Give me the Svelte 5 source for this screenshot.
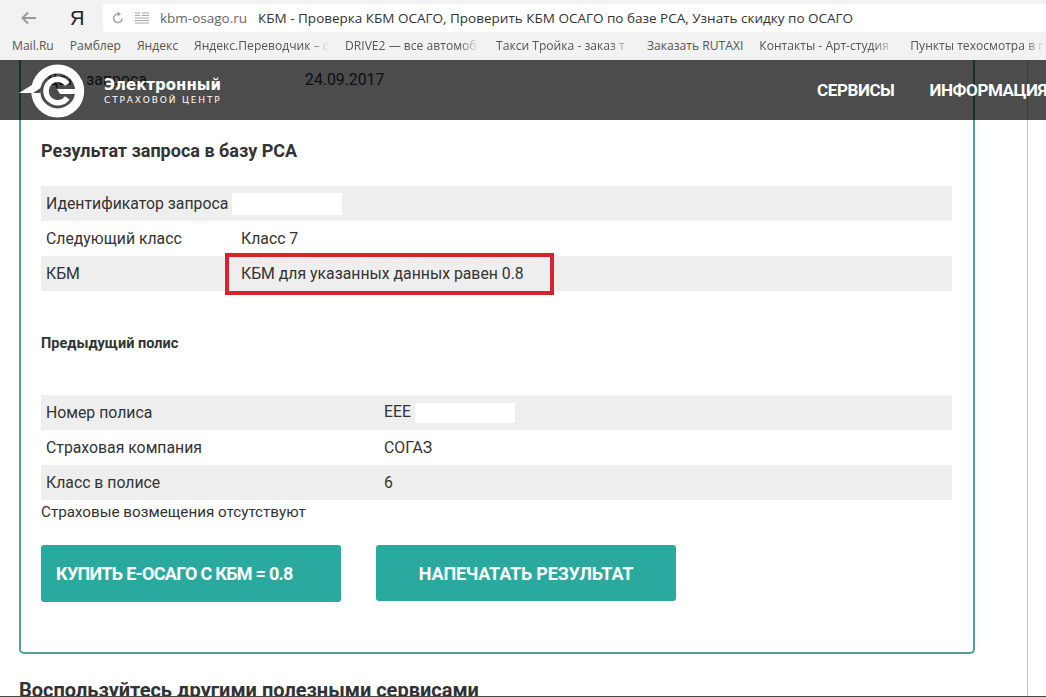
<script>
  const bookmarks = [
    { label: 'Mail.Ru' },
    { label: 'Рамблер' },
    { label: 'Яндекс' },
    { label: 'Яндекс.Переводчик – с', fade: true },
    { label: 'DRIVE2 — все автомоб', fade: true },
    { label: 'Такси Тройка - заказ т', fade: true },
    { label: 'Заказать RUTAXI' },
    { label: 'Контакты - Арт-студия', fade: true },
    { label: 'Пункты техосмотра в г', fade: true },
  ];

  const previousPolicy = [
    { label: 'Страховая компания', value: 'СОГАЗ' },
    { label: 'Класс в полисе', value: '6' },
  ];
</script>

<div class="window">
  <div class="toolbar">
    <svg class="back" width="18" height="14" viewBox="0 0 18 14" aria-hidden="true">
      <path d="M8 1.500 2.500 7 8 12.500M3 7h13" fill="none" stroke="#9a9a9a" stroke-width="2" />
    </svg>
    <span class="ya">Я</span>
    <div class="address">
      <svg width="14" height="14" viewBox="0 0 14 14" aria-hidden="true">
        <path d="M11 7.500A4.200 4.200 0 1 1 7 3.200" fill="none" stroke="#a3a3a3" stroke-width="1.500" />
        <path d="M6.500 .5 10 3 7 5.500z" fill="#a3a3a3" />
      </svg>
      <svg class="reader" width="14" height="13" viewBox="0 0 14 13" aria-hidden="true">
        <path d="M0 1h5M0 3.500h5M0 6h14M0 8.500h14M0 11h14M7 1h7M7 3.500h7" stroke="#a8a8a8" stroke-width="1" />
      </svg>
      <span class="host">kbm-osago.ru</span>
      <span class="title">КБМ - Проверка КБМ ОСАГО, Проверить КБМ ОСАГО по базе РСА, Узнать скидку по ОСАГО</span>
    </div>
  </div>

  <div class="bookmarks">
    {#each bookmarks as b}
      <span class="bookmark" class:fade={b.fade}>{b.label}</span>
    {/each}
  </div>

  <div class="viewport">
    <div class="content">
      <section class="card">
        <div class="row date-row">
          <span>Дата запроса</span>
          <span>24.09.2017</span>
        </div>

        <h2>Результат запроса в базу РСА</h2>

        <div class="table">
          <div class="row first">
            <span>Идентификатор запроса</span>
            <span class="blank request-id"></span>
          </div>
          <div class="row first">
            <span>Следующий класс</span>
            <span>Класс 7</span>
          </div>
          <div class="row first marked">
            <span>КБМ</span>
            <span>КБМ для указанных данных равен 0.8</span>
            <span class="red-box"></span>
          </div>
        </div>

        <h3>Предыдущий полис</h3>

        <div class="table">
          <div class="row second">
            <span>Номер полиса</span>
            <span>ЕЕЕ<span class="blank policy-no"></span></span>
          </div>
          {#each previousPolicy as p}
            <div class="row second">
              <span>{p.label}</span>
              <span>{p.value}</span>
            </div>
          {/each}
        </div>

        <p class="note">Страховые возмещения отсутствуют</p>

        <div class="actions">
          <button type="button" class="btn buy">КУПИТЬ Е-ОСАГО С КБМ = 0.8</button>
          <button type="button" class="btn print">НАПЕЧАТАТЬ РЕЗУЛЬТАТ</button>
        </div>
      </section>

      <h2 class="services">Воспользуйтесь другими полезными сервисами</h2>
    </div>

    <header class="site-header">
      <div class="logo">
        <svg width="68" height="58" viewBox="0 0 68 58" aria-hidden="true">
          <!-- outer ring, inner C and the bar running out to the ring -->
          <circle cx="39.700" cy="30" r="22" fill="none" stroke="#fff" stroke-width="9" />
          <path d="M49.300 23.200A11.750 11.750 0 1 0 49.300 36.800" fill="none" stroke="#fff" stroke-width="5.500" />
          <path d="M39 28H62V33H42z" fill="#fff" />
          <!-- wing on the left, with its notch cut out of the ring -->
          <path d="M1 32 17 22V32z" fill="#fff" />
          <path d="M15 32 24 26 22 32z" fill="#4d4d4d" />
        </svg>
        <span class="divider"></span>
        <div class="brand">
          <strong>Электронный</strong>
          <span>СТРАХОВОЙ ЦЕНТР</span>
        </div>
      </div>
      <nav>
        <span>СЕРВИСЫ</span>
        <span>ИНФОРМАЦИЯ</span>
      </nav>
    </header>
  </div>
</div>

<style>
  :global(body) {
    margin: 0;
    background: #fff;
  }

  .window {
    width: 1046px;
    height: 697px;
    display: flex;
    flex-direction: column;
    overflow: hidden;
    font-family: Roboto, "Noto Sans", sans-serif;
    color: #333;
  }

  .toolbar {
    height: 33px;
    flex: none;
    box-sizing: border-box;
    padding: 4px 0 1px 20px;
    display: flex;
    align-items: center;
    background: #f2f2f2;
  }

  .back {
    flex: none;
  }

  .ya {
    width: 12px;
    margin-left: 32px;
    font: 20px "Liberation Sans", sans-serif;
    color: #222;
  }

  .address {
    flex: 1;
    height: 28px;
    margin-left: 21px;
    padding-left: 8px;
    display: flex;
    align-items: center;
    background: #fff;
    border-radius: 2px 0 0 2px;
    font: 13.500px "Open Sans", sans-serif;
    white-space: nowrap;
  }

  .reader {
    margin-left: 10px;
  }

  .host {
    margin-left: 11px;
    color: #666;
  }

  .title {
    margin-left: 11px;
    color: #333;
  }

  .bookmarks {
    height: 27px;
    flex: none;
    box-sizing: border-box;
    padding: 0 0 3px 12px;
    display: flex;
    align-items: center;
    gap: 16px;
    background: #f2f2f2;
    font: 12.100px "Open Sans", sans-serif;
    color: #555;
    white-space: nowrap;
  }

  .bookmark {
    flex: none;
  }

  .bookmark.fade {
    width: 135px;
    overflow: hidden;
    mask-image: linear-gradient(to right, #000 85%, transparent);
  }

  .viewport {
    flex: 1;
    min-height: 0;
    position: relative;
    overflow: hidden;
    border-bottom: 1px solid #3a4a4a;
  }

  .content {
    width: 1028px;
    height: 100%;
    box-sizing: border-box;
    padding-left: 19px;
    border-right: 1px solid #c4c4c4;
    font-size: 15.800px;
  }

  .card {
    width: 956px;
    height: 594px;
    box-sizing: border-box;
    padding: 2px 21px 0 20px;
    border: 2px solid #4fa09f;
    border-top: 0;
    border-radius: 0 0 5px 5px;
  }

  .row {
    height: 35px;
    padding-left: 5px;
    display: grid;
    align-items: center;
    line-height: 1;
  }

  .date-row {
    grid-template-columns: 259px 1fr;
  }

  .first {
    grid-template-columns: 195px 1fr;
  }

  .second {
    grid-template-columns: 338px 1fr;
  }

  .table .row:nth-child(odd) {
    background: #eee;
  }

  .marked {
    position: relative;
  }

  .red-box {
    position: absolute;
    left: 184px;
    top: -3px;
    width: 329px;
    height: 42px;
    box-sizing: border-box;
    border: 4px solid #d8232e;
  }

  .blank {
    display: inline-block;
    background: #fff;
  }

  .request-id {
    width: 110px;
    height: 22px;
    margin-left: -9px;
  }

  .policy-no {
    width: 100px;
    height: 20px;
    margin-left: 4px;
    vertical-align: middle;
  }

  h2 {
    margin: 39px 0 20px;
    font-size: 18px;
    line-height: 30px;
    font-weight: 700;
  }

  h3 {
    margin: 43px 0 41px;
    font-size: 14.500px;
    line-height: 20px;
    font-weight: 700;
  }

  .note {
    margin: 0;
    font-size: 15.200px;
    line-height: 25px;
  }

  .actions {
    margin-top: 20px;
    display: flex;
    align-items: flex-start;
    gap: 35px;
  }

  .btn {
    width: 300px;
    height: 57px;
    border: 0;
    border-radius: 3px;
    background: #2aa99f;
    color: #fff;
    font: 700 18px Roboto, sans-serif;
  }

  .buy {
    padding: 0 0 0 15px;
    text-align: left;
    letter-spacing: -0.700px;
  }

  .print {
    height: 56px;
    letter-spacing: -0.200px;
  }

  .services {
    margin: 22px 0 0;
    font-size: 20px;
    line-height: 28px;
    white-space: nowrap;
  }

  .site-header {
    position: absolute;
    left: 0;
    top: 0;
    width: 100%;
    height: 60px;
    display: flex;
    align-items: center;
    background: rgba(0, 0, 0, 0.7);
    color: #fff;
    white-space: nowrap;
  }

  .logo {
    width: 201px;
    margin-left: 18px;
    flex: none;
    display: flex;
    align-items: center;
  }

  .logo svg {
    flex: none;
  }

  .divider {
    width: 1px;
    height: 40px;
    margin-left: 8px;
    background: #bbb;
  }

  .brand {
    margin-left: 10px;
    display: flex;
    flex-direction: column;
    gap: 2px;
    margin-top: 2px;
  }

  .brand strong {
    font: 700 15px "DejaVu Sans", sans-serif;
    line-height: 16px;
  }

  .brand span {
    font: 9px "DejaVu Sans", sans-serif;
    letter-spacing: 1.850px;
    line-height: 11px;
  }

  nav {
    margin-left: 598px;
    flex: none;
    display: flex;
    gap: 35px;
    font: 700 17px Roboto, sans-serif;
    letter-spacing: -0.400px;
  }
</style>
